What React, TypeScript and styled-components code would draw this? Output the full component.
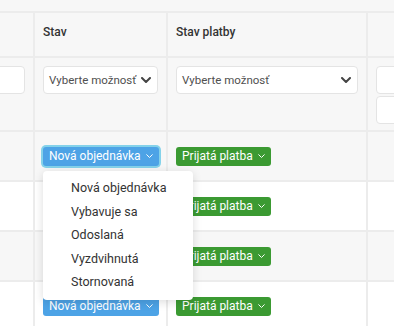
import React from 'react';
import styled, { createGlobalStyle } from 'styled-components';

const GlobalStyle = createGlobalStyle`
  html, body {
    margin: 0;
    padding: 0;
    background: #ffffff;
  }
  body {
    font-family: Roboto, 'Liberation Sans', sans-serif;
    color: #333;
  }
`;

const Page = styled.div`
  width: 394px;
  height: 326px;
  overflow: hidden;
  position: relative;
  background: #fff;
`;

const Table = styled.div`
  width: 440px;
`;

const TopStrip = styled.div`
  height: 11px;
  background: #f7f7f7;
  border-bottom: 2px solid #ececec;
`;

const Row = styled.div<{ $height: number; $shaded?: boolean }>`
  display: grid;
  grid-template-columns: 35px 133px 200px 1fr;
  height: ${(p) => p.$height}px;
  background: ${(p) => (p.$shaded ? '#f7f7f7' : '#ffffff')};
  border-bottom: 2px solid #ececec;
  box-sizing: border-box;
`;

const Cell = styled.div<{ $align?: 'top' | 'center' }>`
  border-right: 2px solid #ececec;
  padding: 0 8px;
  display: flex;
  flex-direction: column;
  justify-content: ${(p) => (p.$align === 'center' ? 'center' : 'flex-start')};
  position: relative;
  box-sizing: border-box;
  min-width: 0;
`;

const HeadCell = styled(Cell)`
  padding-top: 12px;
  font-size: 12px;
  font-weight: 500;
  color: #333;
`;

const FilterCell = styled(Cell)`
  padding-top: 8px;
  gap: 2px;
`;

const Select = styled.div`
  height: 28px;
  background: #fff;
  border: 1px solid #e4e4e4;
  border-radius: 4px;
  box-sizing: border-box;
  display: flex;
  align-items: center;
  justify-content: space-between;
  padding: 0 6px 0 5px;
  font-size: 11.5px;
  color: #505050;
  white-space: nowrap;
  overflow: hidden;
`;

const Input = styled.div<{ $offLeft?: boolean }>`
  height: 28px;
  background: #fff;
  border: 1px solid #e4e4e4;
  border-radius: 4px;
  box-sizing: border-box;
  margin-left: ${(p) => (p.$offLeft ? '-40px' : '0')};
`;

const Badge = styled.div<{ $color: string; $focus?: boolean }>`
  display: inline-flex;
  align-items: center;
  align-self: flex-start;
  gap: 5px;
  height: 19px;
  padding: 0 6px 0 6px;
  border-radius: 3px;
  background: ${(p) => p.$color};
  color: #fff;
  font-size: 12px;
  white-space: nowrap;
  box-shadow: ${(p) => (p.$focus ? '0 0 0 2px #84d2ea' : 'none')};
`;

const Menu = styled.div`
  position: absolute;
  left: 8px;
  top: 39px;
  width: 150px;
  background: #fff;
  border-radius: 4px;
  box-shadow: 0 2px 10px rgba(0, 0, 0, 0.14);
  padding: 5px 0 6px;
  z-index: 5;
`;

const MenuItem = styled.div`
  height: 23.5px;
  line-height: 23.5px;
  padding-left: 28px;
  font-size: 12.5px;
  color: #333;
  white-space: nowrap;
`;

const Chevron = ({ size = 8, weight = 1.6, color = '#fff' }: { size?: number; weight?: number; color?: string }) => (
  <svg width={size} height={size * 0.6} viewBox="0 0 10 6" fill="none" style={{ flexShrink: 0 }}>
    <path d="M1 1l4 4 4-4" stroke={color} strokeWidth={weight} strokeLinecap="round" strokeLinejoin="round" />
  </svg>
);

const statuses = ['Nová objednávka', 'Vybavuje sa', 'Odoslaná', 'Vyzdvihnutá', 'Stornovaná'];

export default function App() {
  return (
    <Page>
      <GlobalStyle />
      <Table>
        <TopStrip />
        <Row $height={45} $shaded>
          <HeadCell />
          <HeadCell>Stav</HeadCell>
          <HeadCell>Stav platby</HeadCell>
          <HeadCell />
        </Row>
        <Row $height={74} $shaded>
          <FilterCell>
            <Input $offLeft />
          </FilterCell>
          <FilterCell>
            <Select>
              Vyberte možnosť
              <Chevron size={10} weight={2} color="#444" />
            </Select>
          </FilterCell>
          <FilterCell>
            <Select>
              Vyberte možnosť
              <Chevron size={10} weight={2} color="#444" />
            </Select>
          </FilterCell>
          <FilterCell>
            <Input />
            <Input />
          </FilterCell>
        </Row>
        {[0, 1, 2, 3].map((i) => (
          <Row key={i} $height={50} $shaded={i % 2 === 0}>
            <Cell $align="center" />
            <Cell $align="center">
              <Badge $color="#4da3e6" $focus={i === 0}>
                Nová objednávka
                <Chevron size={7} weight={1.4} />
              </Badge>
              {i === 0 && (
                <Menu>
                  {statuses.map((s) => (
                    <MenuItem key={s}>{s}</MenuItem>
                  ))}
                </Menu>
              )}
            </Cell>
            <Cell $align="center">
              <Badge $color="#3b9a32">
                Prijatá platba
                <Chevron size={7} weight={1.4} />
              </Badge>
            </Cell>
            <Cell $align="center" />
          </Row>
        ))}
      </Table>
    </Page>
  );
}
